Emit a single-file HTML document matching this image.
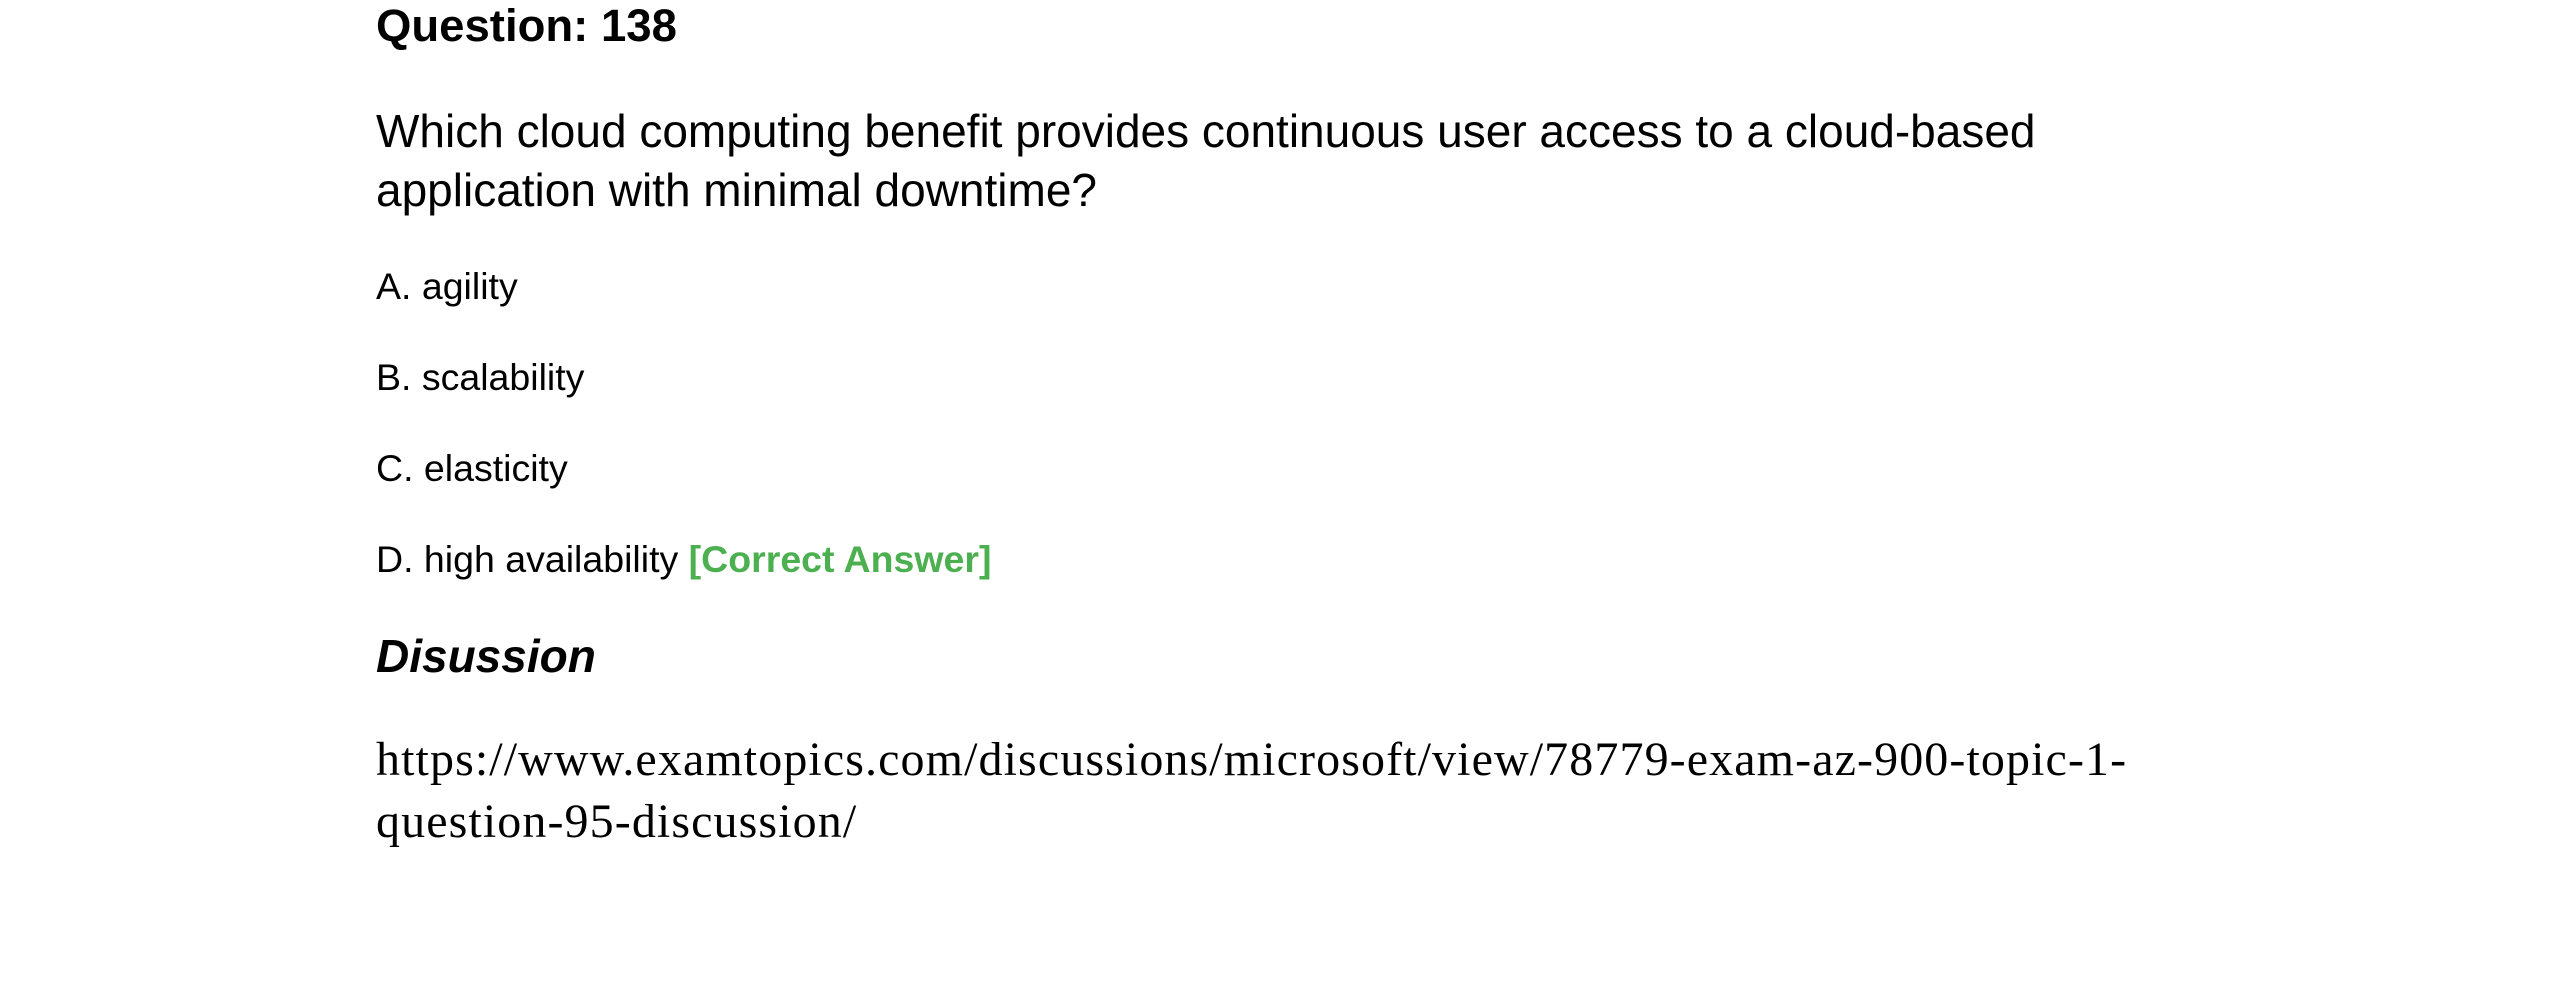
<!DOCTYPE html>
<html><head><meta charset="utf-8"><style>
body{margin:0;width:2550px;height:1002px;background:#fff;position:relative;overflow:hidden;font-family:"Liberation Sans",Arial,sans-serif;color:#000}
div{position:absolute;left:376px;line-height:1;white-space:nowrap}
.q{font-size:46px}
.o{font-size:37.5px}
.u{font-family:"Liberation Serif",serif;font-size:48px;letter-spacing:1.1px}
</style></head><body>
<div style="top:3px;font-size:45.5px;font-weight:bold">Question: 138</div>
<div class="q" style="top:108px">Which cloud computing benefit provides continuous user access to a cloud-based</div>
<div class="q" style="top:167px">application with minimal downtime?</div>
<div class="o" style="top:268px">A. agility</div>
<div class="o" style="top:359px">B. scalability</div>
<div class="o" style="top:450px">C. elasticity</div>
<div class="o" style="top:541px">D. high availability <b style="color:#4caf50">[Correct Answer]</b></div>
<div style="top:633px;font-size:46px;font-weight:bold;font-style:italic">Disussion</div>
<div class="u" style="top:736px">https://www.examtopics.com/discussions/microsoft/view/78779-exam-az-900-topic-1-</div>
<div class="u" style="top:798px">question-95-discussion/</div>
</body></html>
